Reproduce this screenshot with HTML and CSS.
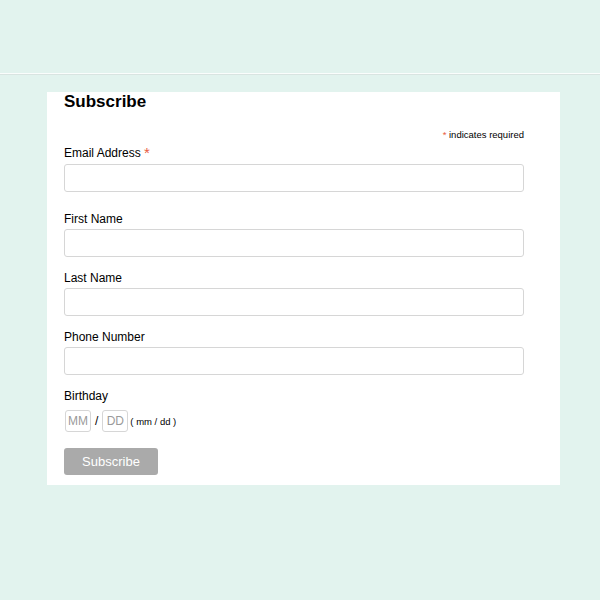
FILE: index.html
```html
<!DOCTYPE html>
<html>
<head>
<meta charset="utf-8">
<link rel="stylesheet" href="styles.css">
</head>
<body>
<div class="topbar"></div>
<div class="card">
  <h2 class="title">Subscribe</h2>
  <div class="req-note"><span class="star">*</span> indicates required</div>
  <div class="field field-first">
    <label class="label">Email Address <span class="star big">*</span></label>
    <input class="input" type="email">
  </div>
  <div class="field">
    <label class="label">First Name</label>
    <input class="input" type="text">
  </div>
  <div class="field">
    <label class="label">Last Name</label>
    <input class="input" type="text">
  </div>
  <div class="field">
    <label class="label">Phone Number</label>
    <input class="input" type="text">
  </div>
  <div class="field field-bday">
    <label class="label">Birthday</label>
    <div class="bday">
      <input class="small" type="text" placeholder="MM">
      <span class="slash">/</span>
      <input class="small" type="text" placeholder="DD">
      <span class="hint">( mm / dd )</span>
    </div>
  </div>
  <button class="btn" type="button">Subscribe</button>
</div>
</body>
</html>
```

FILE: styles.css
```css
html, body {
  margin: 0;
  padding: 0;
  background: #e2f3ee;
  font-family: "Liberation Sans", Arial, sans-serif;
  color: #000;
}
.topbar {
  height: 73px;
  border-bottom: 1px solid #fafdfc;
  box-shadow: 0 1px 0 #d9e4e1;
}
.card {
  background: #fff;
  margin: 18px 0 0 47px;
  width: 460px;
  padding: 0 36px 10px 17px;
}
.title {
  margin: 0;
  font-size: 17px;
  font-weight: bold;
  line-height: 20px;
}
.req-note {
  text-align: right;
  font-size: 9.5px;
  line-height: 12px;
  margin-top: 17px;
}
.star {
  color: #e85c41;
}
.star.big {
  font-size: 15px;
  line-height: 1px;
  vertical-align: -1px;
}
.field {
  display: flex;
  flex-direction: column;
  margin-bottom: 13px;
}
.field-first {
  margin-top: 4px;
  margin-bottom: 19px;
}
.field-first .label {
  margin-bottom: 3px;
}
.label {
  font-size: 12px;
  line-height: 16px;
  margin: 0 0 2px;
}
.input {
  box-sizing: border-box;
  height: 28px;
  width: 460px;
  border: 1px solid #d6d6d6;
  border-radius: 3px;
  margin: 0;
  padding: 0 6px;
  font: 13px "Liberation Sans", Arial, sans-serif;
}
.field-bday {
  margin-bottom: 16px;
}
.bday {
  display: flex;
  align-items: center;
  margin-top: 4px;
}
.small {
  box-sizing: border-box;
  width: 26px;
  height: 22px;
  border: 1px solid #d6d6d6;
  border-radius: 3px;
  padding: 0 2px;
  margin: 0 0 0 1px;
  font: 12px "Liberation Sans", Arial, sans-serif;
  text-align: center;
}
.small::placeholder {
  color: #9a9a9a;
}
.slash {
  font-size: 12px;
  margin: 0 3px 0 4px;
}
.hint {
  font-size: 9.5px;
  margin-left: 2px;
}
.btn {
  display: block;
  box-sizing: border-box;
  width: 94px;
  height: 27px;
  background: #aaaaaa;
  color: #fff;
  border: none;
  border-radius: 3px;
  font: 13px "Liberation Sans", Arial, sans-serif;
  padding: 0;
}
```
